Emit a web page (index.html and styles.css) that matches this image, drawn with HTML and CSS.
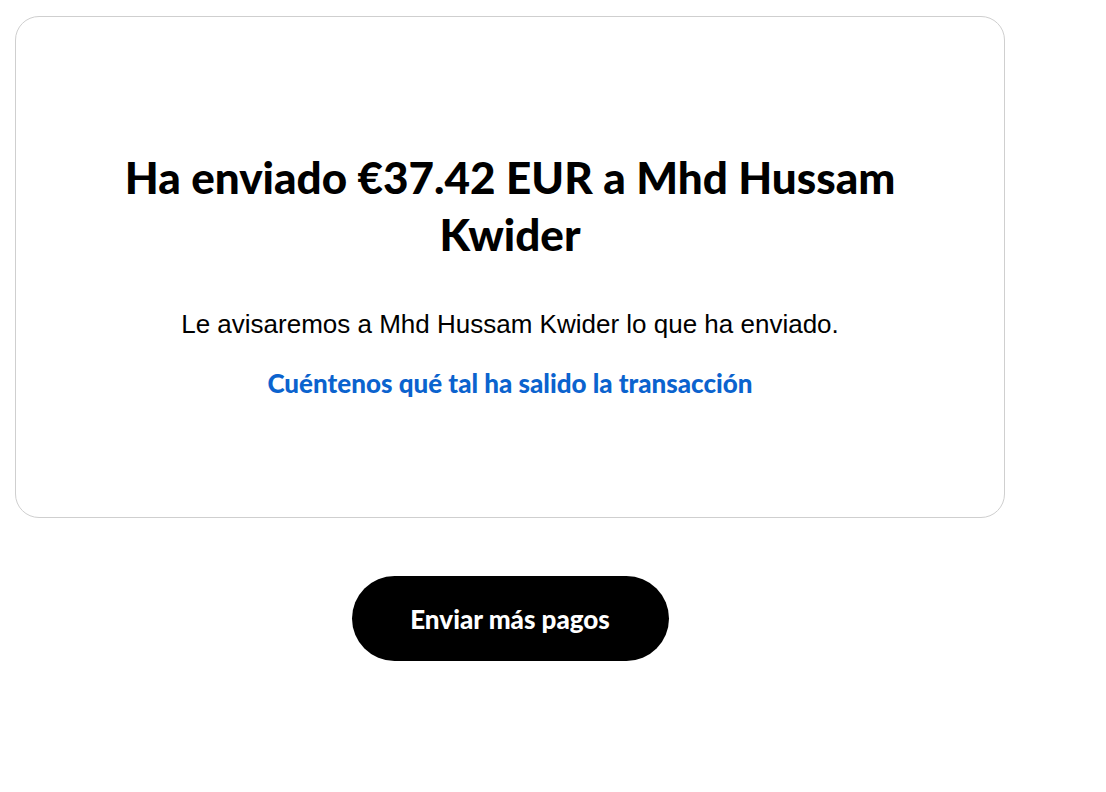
FILE: index.html
```html
<!DOCTYPE html>
<html lang="es">
<head>
    <meta charset="UTF-8">
    <meta name="viewport" content="width=device-width, initial-scale=1.0">
    <title>Pago enviado</title>
    <link rel="stylesheet" href="styles.css">
</head>
<body>
    <div class="page">
        <div class="card">
            <h1>Ha enviado €37.42 EUR a Mhd Hussam Kwider</h1>
            <p class="notice">Le avisaremos a Mhd Hussam Kwider lo que ha enviado.</p>
            <a class="feedback-link" href="#">Cuéntenos qué tal ha salido la transacción</a>
        </div>
        <div class="actions">
            <button type="button">Enviar más pagos</button>
        </div>
    </div>
</body>
</html>
```

FILE: styles.css
```css
body {
    margin: 0;
    padding: 16px 15px;
    background: #fff;
    font-family: Lato, "Liberation Sans", sans-serif;
    color: #000;
}
.page {
    width: 990px;
}
.card {
    border: 1px solid #cfcfcf;
    border-radius: 24px;
    height: 502px;
    box-sizing: border-box;
    padding-top: 132px;
    text-align: center;
}
h1 {
    max-width: 800px;
    margin: 0 auto;
    font-size: 44px;
    line-height: 57px;
    font-weight: 900;
}
.notice {
    margin: 46px 0 0;
    font-family: "Liberation Sans", Arial, sans-serif;
    font-size: 26px;
    line-height: 30px;
}
.feedback-link {
    display: inline-block;
    margin-top: 28px;
    color: #0b63ce;
    font-size: 26px;
    font-weight: 900;
    text-decoration: none;
}
.actions {
    margin-top: 58px;
    text-align: center;
}
button {
    width: 317px;
    height: 85px;
    background-color: #000;
    color: #fff;
    border: none;
    border-radius: 43px;
    font-family: Lato, "Liberation Sans", sans-serif;
    font-size: 26px;
    font-weight: 900;
    cursor: pointer;
}
```
